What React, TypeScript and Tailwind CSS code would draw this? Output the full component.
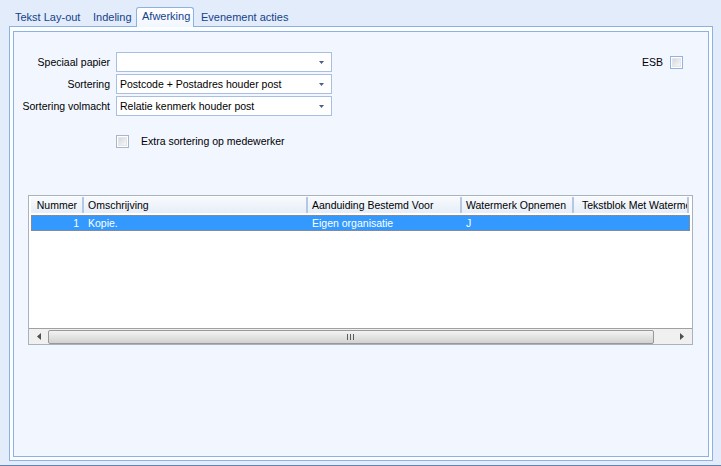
import React from "react";

const Arrow = () => (
  <svg width="5" height="3" viewBox="0 0 5 3" className="block">
    <path d="M0 0H5L2.5 3Z" fill="#4a5f88" />
  </svg>
);

const Combo = ({ value }: { value: string }) => (
  <div className="h-[20px] w-[216px] border border-[#a7bfe2] bg-white flex items-center pl-[3px] pr-[7px]">
    <span className="flex-1 truncate leading-[13px]">{value}</span>
    <Arrow />
  </div>
);

const Check = ({ blue }: { blue?: boolean }) => (
  <div
    className={`w-[13px] h-[13px] border ${blue ? "border-[#92b3e0]" : "border-[#a9b6c8]"} bg-white p-[1px]`}
  >
    <div className="w-full h-full bg-gradient-to-br from-[#d6d9de] to-[#f6f7f9] border border-[#e4e6ea]" />
  </div>
);

export default function App() {
  const headers = [
    { t: "Nummer", w: "w-[53px]", cls: "justify-end pr-[5px]" },
    { t: "Omschrijving", w: "w-[224px]", cls: "pl-[4px]" },
    { t: "Aanduiding Bestemd Voor", w: "w-[154px]", cls: "pl-[4px]" },
    { t: "Watermerk Opnemen", w: "w-[112px]", cls: "pl-[4px]" },
    { t: "Tekstblok Met Watermerk", w: "w-[115px]", cls: "pl-[8px]" },
  ];
  return (
    <div
      className="w-[721px] h-[466px] bg-[#e2ecfb] flex flex-col text-[10.5px] text-black overflow-hidden"
      style={{ fontFamily: '"Liberation Sans", Arial, sans-serif' }}
    >
      {/* tab bar */}
      <div className="h-[26px] flex items-end pl-[9px] text-[#15428b] shrink-0 text-[11px]">
        <div className="w-[78px] h-[17px] pl-[6px] pt-[2px] leading-[13px]">Tekst Lay-out</div>
        <div className="w-[49px] h-[17px] pl-[6px] pt-[2px] leading-[13px]">Indeling</div>
        <div className="relative z-10 -mb-px w-[58px] h-[20px] border border-b-0 border-[#8db1e2] rounded-t-[3px] bg-gradient-to-b from-[#ffffff] to-[#f1f6ff] pl-[5px] pt-[2px] leading-[13px]">
          Afwerking
        </div>
        <div className="h-[17px] pl-[7px] pt-[2px] leading-[13px]">Evenement acties</div>
      </div>

      {/* panel */}
      <div className="ml-[9px] w-[704px] h-[435px] border border-[#8db1e2] bg-[#fbfdff] p-[3px] pt-[4px] flex shrink-0">
        <div className="flex-1 border border-[#8db1e2] bg-[#f1f6ff] flex flex-col">
          {/* form */}
          <div className="flex justify-between mt-[20px] pr-[25px]">
            <div className="flex flex-col gap-[2px]">
              {[
                ["Speciaal papier", ""],
                ["Sortering", "Postcode + Postadres houder post"],
                ["Sortering volmacht", "Relatie kenmerk houder post"],
              ].map(([l, v]) => (
                <div key={l} className="flex items-center gap-[6px]">
                  <div className="w-[96px] text-right leading-[13px] whitespace-nowrap">{l}</div>
                  <Combo value={v} />
                </div>
              ))}
            </div>
            <div className="flex items-center gap-[7px] h-[20px]">
              <span className="leading-[13px]">ESB</span>
              <Check blue />
            </div>
          </div>

          <div className="flex items-center mt-[19px] ml-[102px] gap-[12px]">
            <Check />
            <span className="leading-[13px]">Extra sortering op medewerker</span>
          </div>

          {/* grid */}
          <div className="mt-[47px] ml-[14px] w-[665px] h-[150px] border border-[#a9b2bf] bg-white flex flex-col">
            <div className="flex-1 px-[2px] pt-[1px] flex flex-col">
              <div className="flex h-[17px] mb-[1px]">
                {headers.map((h) => (
                  <div
                    key={h.t}
                    className={`${h.w} ${h.cls} h-[16px] flex items-center border-r-2 border-[#b4c7e3] bg-gradient-to-b from-[#f8fafd] to-[#e7eef8] overflow-hidden whitespace-nowrap leading-[13px]`}
                  >
                    {h.t}
                  </div>
                ))}
              </div>
              <div className="flex h-[16px] bg-[#3399ff] text-white border border-dotted border-[#c8803f] items-center">
                <div className="w-[52px] text-right pr-[5px] leading-[13px]">1</div>
                <div className="w-[224px] pl-[4px] leading-[13px]">Kopie.</div>
                <div className="w-[154px] pl-[4px] leading-[13px]">Eigen organisatie</div>
                <div className="w-[112px] pl-[4px] leading-[13px]">J</div>
                <div className="flex-1" />
              </div>
            </div>
            {/* scrollbar */}
            <div className="h-[16px] border-t border-[#a0a0a0] bg-[#f0f0f0] flex items-center">
              <div className="w-[19px] h-full flex items-center justify-center">
                <svg width="4" height="7" viewBox="0 0 4 7">
                  <path d="M4 0V7L0 3.5Z" fill="#505050" />
                </svg>
              </div>
              <div className="w-[606px] h-[14px] rounded-[2px] border border-[#989898] bg-gradient-to-b from-[#f3f3f3] to-[#d2d2d2] flex items-center justify-center">
                <div className="flex gap-[2px] h-[6px] ml-[-2px]">
                  <div className="w-px h-full bg-[#5a5a5a]" />
                  <div className="w-px h-full bg-[#5a5a5a]" />
                  <div className="w-px h-full bg-[#5a5a5a]" />
                </div>
              </div>
              <div className="flex-1 h-full flex items-center justify-end pr-[8px]">
                <svg width="4" height="7" viewBox="0 0 4 7">
                  <path d="M0 0V7L4 3.5Z" fill="#505050" />
                </svg>
              </div>
            </div>
          </div>
        </div>
      </div>
      <div className="flex-1" />
      <div className="h-px bg-[#6383b6] shrink-0" />
    </div>
  );
}
